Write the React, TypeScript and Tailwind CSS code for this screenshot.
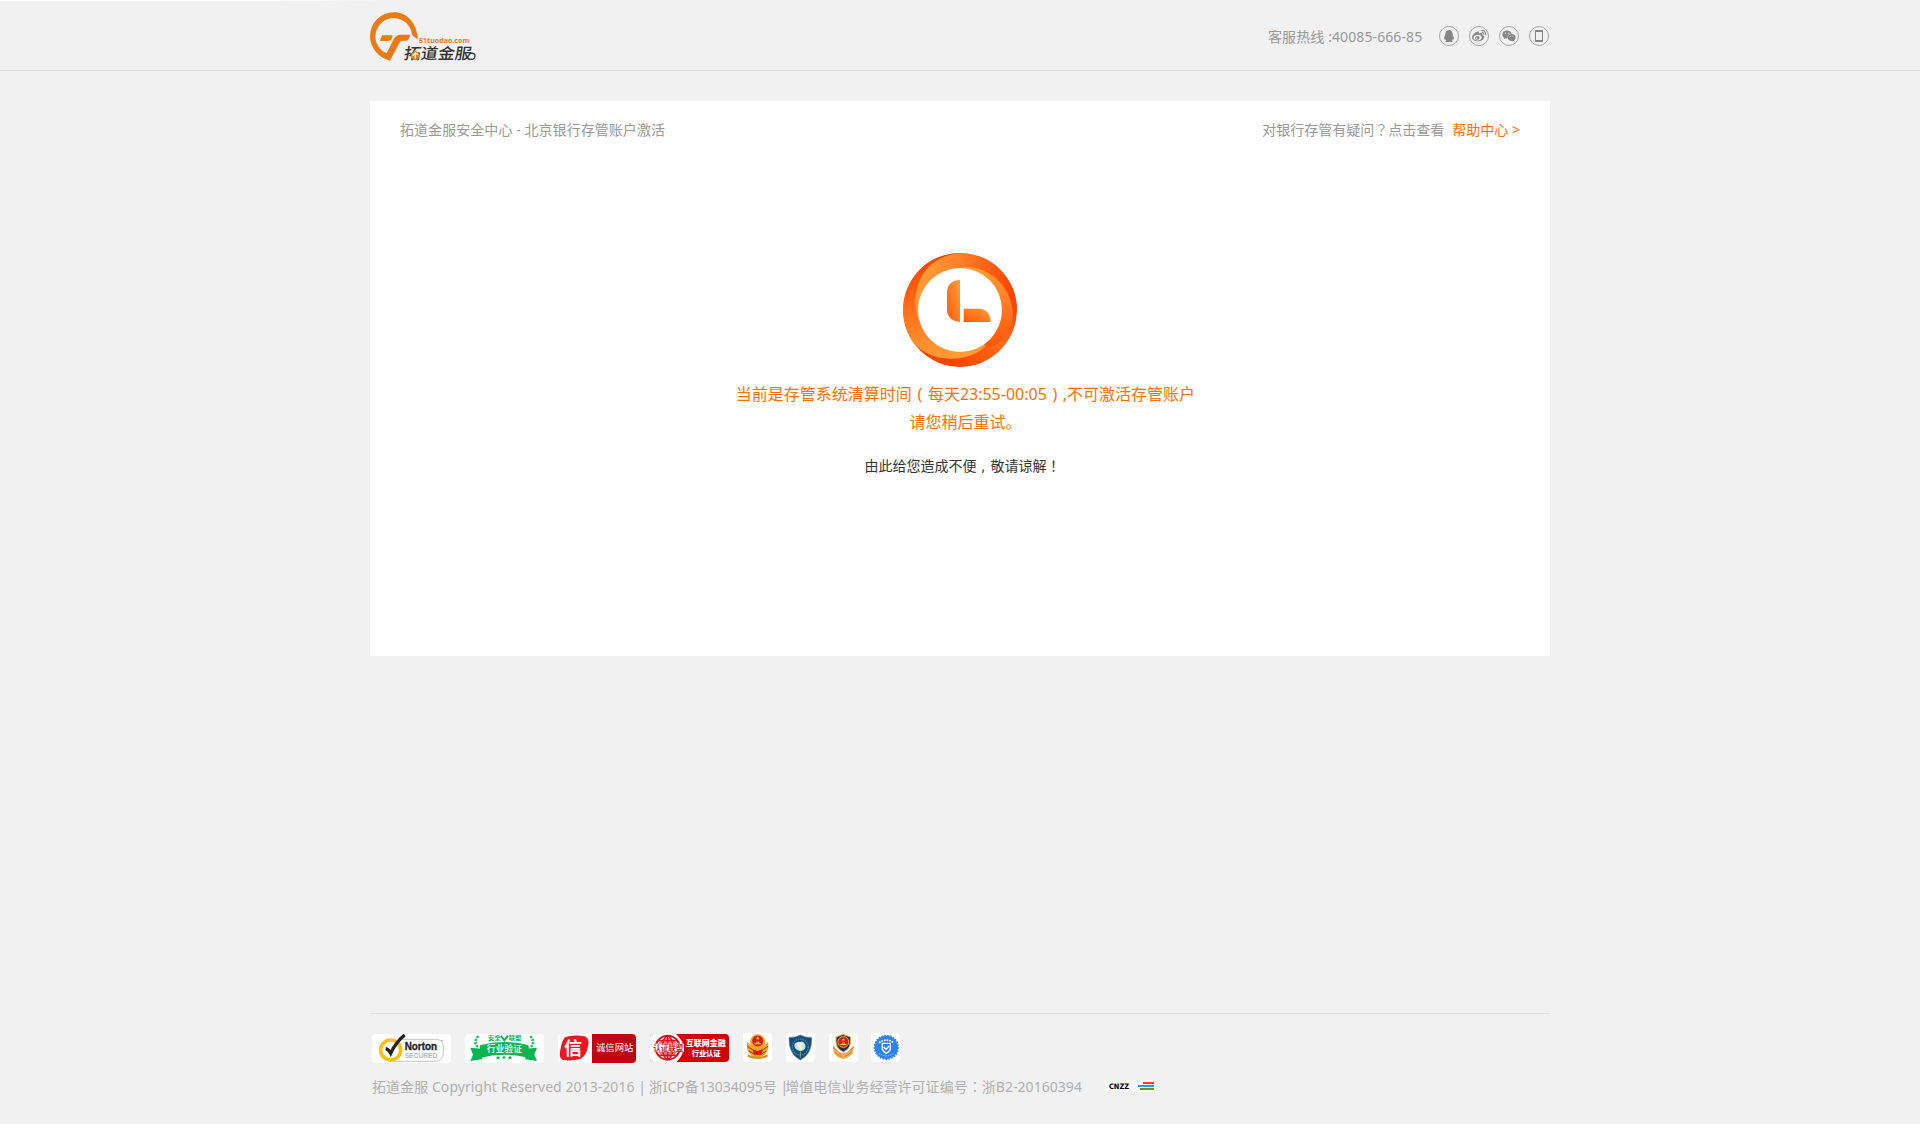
import React from "react";
import { FaQq, FaWeibo, FaWeixin } from "react-icons/fa";

const CJK = "font-['Noto_Sans','Noto_Sans_CJK_SC',sans-serif]";

/* Full-width punctuation centred in its cell */
function Mid({ children }: { children: React.ReactNode }) {
  return <span className="font-['Noto_Sans_CJK_TC',sans-serif] leading-0">{children}</span>;
}

function Logo() {
  return (
    <svg className="mt-3 block h-[50px] w-[108px]" viewBox="30 36 324 150">
      <g fill="#ec7a14">
        <path d="M90 182 C56 172 30 145 30 108 A71.500 71.500 0 0 1 101.500 36.500 C140 36.500 170 66 174 118 C166 113 162 112 156 104 A55 55 0 1 0 80 160 L100 119 Q106 105 120 104 L151 104 Q147 122 138 122 L128 122 Q121 122 118 129 Z" />
        <path d="M66 106 H98 Q96 123 86 123 H60 Z" />
      </g>
      <text x="177" y="129" textLength="151" lengthAdjust="spacingAndGlyphs" fill="#ec7a14" fontSize="20" fontWeight="700" fontFamily="'Noto Sans', sans-serif">51tuodao.com</text>
      <text x="0" y="0" transform="translate(130 176) skewX(-9)" textLength="203" lengthAdjust="spacingAndGlyphs" fill="#333" fontSize="46" fontWeight="500" fontFamily="'Noto Sans CJK SC', sans-serif">拓道金服</text>
      <circle cx="166" cy="167" r="13" fill="#ec7a14" />
      <path d="M158 168 L166 158 L174 164 M166 159 V176" fill="none" stroke="#f1f1f1" strokeWidth="4" />
      <path d="M330 160 Q347 158 345 169 Q342 181 331 177" fill="none" stroke="#333" strokeWidth="4" />
    </svg>
  );
}

function Round({ children }: { children: React.ReactNode }) {
  return <span className="flex size-5 items-center justify-center rounded-full border border-[#a5a5a5] text-[#858585]">{children}</span>;
}

function Clock() {
  return (
    <svg className="block size-[114px]" viewBox="39 39 342 342">
      <defs>
        <clipPath id="disc">
          <circle cx="210" cy="210" r="171" />
        </clipPath>
        <linearGradient id="base" gradientUnits="userSpaceOnUse" x1="350" y1="170" x2="215" y2="375">
          <stop offset="0" stopColor="#ff4300" />
          <stop offset=".5" stopColor="#ff6d1c" />
          <stop offset="1" stopColor="#ff4600" />
        </linearGradient>
        <linearGradient id="left" gradientUnits="userSpaceOnUse" x1="130" y1="55" x2="170" y2="350">
          <stop offset="0" stopColor="#ff4300" />
          <stop offset="1" stopColor="#ff9d35" />
        </linearGradient>
        <linearGradient id="right" gradientUnits="userSpaceOnUse" x1="90" y1="130" x2="365" y2="150">
          <stop offset="0" stopColor="#ff9d35" />
          <stop offset=".4" stopColor="#ff812a" />
          <stop offset="1" stopColor="#ff4500" />
        </linearGradient>
        <linearGradient id="rim" gradientUnits="userSpaceOnUse" x1="270" y1="90" x2="320" y2="320">
          <stop offset="0" stopColor="#ff9d35" />
          <stop offset=".5" stopColor="#ff7c26" />
          <stop offset="1" stopColor="#ff5509" />
        </linearGradient>
        <linearGradient id="h1" x1="1" y1="0" x2="0" y2="1">
          <stop offset="0" stopColor="#ffa037" />
          <stop offset="1" stopColor="#ff5a10" />
        </linearGradient>
        <linearGradient id="h2" x1="0" y1="1" x2="1" y2="0">
          <stop offset="0" stopColor="#ff5609" />
          <stop offset="1" stopColor="#ffa037" />
        </linearGradient>
      </defs>
      <g clipPath="url(#disc)">
        <circle cx="210" cy="210" r="171" fill="url(#base)" />
        <path d="M210 39 H39 V255 C64 320 115 356 185 356 C250 356 290 325 315 285 L210 200 Z" fill="url(#left)" />
        <path d="M210 39 C120 48 76 112 76 190 Q76 215 86 240 L210 210 L368 240 L381 210 V39 Z" fill="url(#right)" />
        <path d="M220 80 C310 80 368 150 369 225 Q368 262 345 290 Q325 315 290 325 L210 210 Z" fill="url(#rim)" />
      </g>
      <circle cx="210" cy="210" r="126" fill="#fff" />
      <path d="M210 119 V246 Q171 242 171 208 V158 Q171 122 210 119 Z" fill="url(#h1)" />
      <path d="M221 206 H268 Q300 208 302 246 H221 Z" fill="url(#h2)" />
    </svg>
  );
}

function Norton() {
  return (
    <svg className="block h-[29px] w-[79px] rounded-[4px] bg-white" viewBox="36 102 237 87">
      <path d="M120 118 H230 Q250 120 250 142 V160 Q248 184 224 184 H100" fill="none" stroke="#c5c5c5" strokeWidth="3" />
      <circle cx="92" cy="150" r="30" fill="#fff" stroke="#fdc010" strokeWidth="11" />
      <path d="M77 146 Q85 147 92 160 Q108 126 134 105" fill="none" stroke="#222" strokeWidth="10" />
      <text x="134" y="150" textLength="97" lengthAdjust="spacingAndGlyphs" fontSize="31" fontWeight="700" fill="#222" stroke="#222" fontFamily="'Liberation Sans', sans-serif">Norton</text>
      <text x="134" y="173" textLength="98" lengthAdjust="spacingAndGlyphs" fontSize="23" fontWeight="700" fill="#b9b9b9" fontFamily="'Liberation Sans', sans-serif">SECURED</text>
      <circle cx="246" cy="121" r="2" fill="#777" />
    </svg>
  );
}

function Alliance() {
  return (
    <svg className="block h-[29px] w-[79px] overflow-visible rounded-[4px] bg-white" viewBox="315 102 237 87" fontFamily="'Noto Sans CJK SC', sans-serif">
      <g fill="none" stroke="#35bd66" strokeWidth="8" strokeDasharray="7 3">
        <path d="M355 108 Q338 128 355 142" />
        <path d="M511 108 Q528 128 511 142" />
      </g>
      <g fill="#0db451">
        <path d="M331 143 L366 146 V178 L331 183 L339 164 Z" />
        <path d="M531 143 L496 146 V178 L531 183 L523 164 Z" />
        <path d="M360 136 Q433 116 506 136 V174 Q433 154 360 174 Z" />
        <text x="383" y="121" textLength="39" lengthAdjust="spacingAndGlyphs" fontSize="17" fontWeight="700">安全</text>
        <text x="446" y="121" textLength="38" lengthAdjust="spacingAndGlyphs" fontSize="17" fontWeight="700">联盟</text>
        <path d="M414 166 l2 5 h5 l-4 3 2 5 -5 -3 -5 3 2 -5 -4 -3 h5 Z M432 165 l2 5 h5 l-4 3 2 5 -5 -3 -5 3 2 -5 -4 -3 h5 Z M450 166 l2 5 h5 l-4 3 2 5 -5 -3 -5 3 2 -5 -4 -3 h5 Z" />
      </g>
      <path d="M423 108 L433 121 L444 107" fill="none" stroke="#0db451" strokeWidth="6" />
      <text x="380" y="156" fontSize="26.500" fontWeight="500" fill="#fff">行业验证</text>
    </svg>
  );
}

function Integrity() {
  return (
    <svg className="block h-[29px] w-[78px] rounded-[4px] bg-white" viewBox="594 102 234 87" fontFamily="'Noto Sans CJK SC', sans-serif">
      <path d="M696 102 H828 V189 H696 Z" fill="#bf0510" />
      <path d="M616 111 Q640 103 674 109 Q690 116 684 138 Q680 168 660 177 Q635 184 608 180 Q594 172 602 145 Q606 120 616 111 Z" fill="#ee1620" />
      <text x="612" y="164" fontSize="54" fontWeight="700" fill="#fff">信</text>
      <text x="708" y="153" textLength="112" fontSize="28" fill="#fff">诚信网站</text>
    </svg>
  );
}

function Finance() {
  return (
    <svg className="block h-7 w-[79px] rounded-[4px] bg-[#d00000]" viewBox="60 102 237 84" fontFamily="'Noto Sans CJK SC', sans-serif">
      <path d="M60 102 H138 Q182 142 140 186 H60 Z" fill="#fff" />
      <g fill="none" stroke="#d9141a" strokeWidth="4">
        <circle cx="113" cy="143" r="36" strokeWidth="6" />
        <ellipse cx="113" cy="143" rx="16" ry="34" />
        <path d="M113 108 V180 M84 122 H142 M84 166 H142" />
      </g>
      <circle cx="113" cy="143" r="30" fill="#d9141a" opacity=".6" />
      <path d="M68 131 H162 V156 H68 Z" fill="#fff" />
      <text x="70" y="152" fontSize="22.500" fontWeight="700" fill="#d9141a">认证联盟</text>
      <g fill="#fff" fontWeight="900">
        <text x="167" y="139" textLength="120" fontSize="24">互联网金融</text>
        <text x="185" y="169" textLength="87" fontSize="22">行业认证</text>
      </g>
    </svg>
  );
}

function Tile({ children }: { children: React.ReactNode }) {
  return (
    <svg className="block size-[29px] rounded-[4px] bg-white" viewBox="0 0 87 87">
      {children}
    </svg>
  );
}

function Emblem() {
  return (
    <>
      <circle cx="44" cy="24" r="18" fill="#d91b12" stroke="#efb730" strokeWidth="3" />
      <path d="M44 10 l1.500 4 h4 l-3 2.500 1 4 -3.500 -2.500 -3.500 2.500 1 -4 -3 -2.500 h4 Z M34 31 H54 V34 H34 Z M39 26 H49 V29 H39 Z" fill="#ffd849" />
    </>
  );
}

export default function App() {
  return (
    <div className={`flex h-[1124px] flex-col overflow-hidden bg-[#f1f1f1] text-[14px] leading-5 text-[#999] ${CJK}`}>
      <div className="h-px w-[400px] shrink-0 bg-linear-to-r from-white from-60% to-[#f1f1f1]" />
      <header className="-mt-px h-[71px] shrink-0 border-b border-[#dcdcdc]">
        <div className="mx-auto flex w-[1180px] justify-between">
          <Logo />
          <div className="mr-px mt-[26px] flex h-5 items-center">
            <span className="mr-4 w-[155px] whitespace-nowrap pt-0.5 tracking-[0.1px]">客服热线 :40085-666-85</span>
            <div className="flex gap-2.5">
              <Round><FaQq size={12} /></Round>
              <Round><FaWeibo size={14} /></Round>
              <Round><FaWeixin size={14} /></Round>
              <Round>
                <svg className="h-3 w-2" viewBox="0 0 8 12">
                  <path d="M.5 .5 H7.500 V11.500 H.5 Z M.5 1.500 H7.500 M.5 10.500 H7.500" fill="none" stroke="currentColor" />
                </svg>
              </Round>
            </div>
          </div>
        </div>
      </header>

      <main className="mx-auto mt-[30px] h-[555px] w-[1180px] shrink-0 bg-white">
        <div className="flex h-10 justify-between px-[30px] pt-[19px]">
          <span className="tracking-[0.06px]">拓道金服安全中心 - 北京银行存管账户激活</span>
          <span className="flex">
            <span>对银行存管有疑问<Mid>？</Mid>点击查看</span>
            <a className="ml-2 text-[#ff7200]">帮助中心 &gt;</a>
          </span>
        </div>
        <div className="mt-28 flex flex-col items-center">
          <Clock />
          <p className="mt-[13px] whitespace-nowrap pl-[11px] text-center text-[16px] leading-7 text-[#ff7200]">
            当前是存管系统清算时间<span className="inline-block w-4 text-center">(</span>每天23:55-00:05<span className="inline-block w-4 text-center">)</span>,不可激活存管账户
            <br />
            请您稍后重试。
          </p>
          <p className="mt-5 pl-[5px] leading-5 text-[#333]">
            由此给您造成不便<span className="inline-block w-3.5 pl-[5px] leading-0">,</span>敬请谅解<Mid>！</Mid>
          </p>
        </div>
      </main>

      <footer className="mx-auto mt-auto h-[111px] w-[1180px] shrink-0 border-t border-[#dcdcdc]">
        <div className="ml-0.5 mt-[19px] flex h-[30px] items-start gap-3.5">
          <div className="mt-px"><Norton /></div>
          <div className="mt-px"><Alliance /></div>
          <div className="mt-px"><Integrity /></div>
          <div className="mt-px"><Finance /></div>
          <Tile>
            <path d="M13 26 Q8 54 24 66 L44 77 L64 66 Q80 54 75 26 L60 42 H28 Z" fill="#e8a91d" />
            <path d="M13 40 L40 58 M75 40 L48 58 M18 54 L38 66 M70 54 L50 66" stroke="#be2c12" strokeWidth="3" />
            <circle cx="44" cy="27" r="23" fill="#e8a91d" />
            <Emblem />
            <path d="M29 49 L44 54 L59 49 L56 63 L44 67 L32 63 Z" fill="#d91b12" />
            <path d="M14 64 Q44 80 74 64 V71 Q44 84 14 71 Z" fill="#d98a16" />
          </Tile>
          <Tile>
            <path d="M9 13 Q27 15 43 6 Q59 15 77 13 Q79 64 43 81 Q7 64 9 13 Z" fill="#174c7b" stroke="#71899c" strokeWidth="2" />
            <circle cx="43" cy="42" r="24" fill="none" stroke="#4c8e9c" strokeWidth="4" strokeDasharray="4 3" />
            <path d="M25 34 Q32 23 42 27 Q52 22 57 34 Q62 44 53 51 Q44 57 35 52 Q24 46 25 34 Z" fill="#c1e3de" />
            <path d="M29 33 Q40 25 52 31 L46 40 L54 44 L42 52 L37 43 Z" fill="#edf6dd" />
            <path d="M43 55 V75" stroke="#b7c76b" strokeWidth="2" />
          </Tile>
          <Tile>
            <path d="M13 35 Q8 63 30 74 L43 78 L56 74 Q79 62 73 35 L57 59 H29 Z" fill="#e8b34b" />
            <path d="M12 43 L36 62 M74 43 L50 62 M17 58 L39 71 M69 58 L47 71" stroke="#ad6a20" strokeWidth="2" />
            <path d="M21 12 L42 4 L65 12 Q69 47 43 57 Q17 47 21 12 Z" fill="#24306c" stroke="#e8b34b" strokeWidth="3" />
            <g transform="translate(3 5) scale(.91)"><Emblem /></g>
          </Tile>
          <div className="-ml-px">
            <Tile>
              <circle cx="46" cy="43" r="35" fill="#2f82f5" />
              <circle cx="46" cy="43" r="36" fill="none" stroke="#2f82f5" strokeWidth="4" strokeDasharray="5 4" />
              <path d="M24 29 Q46 14 68 29" fill="none" stroke="#fff" strokeWidth="5" strokeDasharray="5 3" />
              <path d="M24 61 Q46 76 68 61" fill="none" stroke="#a9ceff" strokeWidth="3" strokeDasharray="4 3" />
              <path d="M34 31 H58 V48 Q56 56 46 61 Q36 56 34 48 Z" fill="none" stroke="#fff" strokeWidth="4" />
              <path d="M38 42 L45 49 L54 40" fill="none" stroke="#fff" strokeWidth="4" />
            </Tile>
          </div>
        </div>
        <div className="ml-0.5 mt-3.5 flex items-center text-[#b0b0b0]">
          <span className="w-[711px] whitespace-nowrap">
            <span className="tracking-[0.06px]">拓道金服 Copyright Reserved 2013-2016 |</span>
            <span className="-ml-px"> 浙ICP备13034095号 |</span>
            <span className="-ml-[3px] tracking-[0.04px]">增值电信业务经营许可证编号<Mid>：</Mid>浙B2-20160394</span>
          </span>
          <svg className="-mt-0.5 ml-[22px] h-3 w-[50px]" viewBox="0 0 50 12">
            <path d="M0 0 H50 V12 H0 Z" fill="#fafafa" />
            <text x="4" y="8.500" textLength="20" lengthAdjust="spacingAndGlyphs" fontSize="7.500" fontWeight="700" fill="#000" fontFamily="'DejaVu Sans', sans-serif">CNZZ</text>
            <path d="M38 2 H49 V4 H38 Z" fill="#ff3540" />
            <path d="M33 5 H49 V7 H33 Z" fill="#2e9bd0" />
            <path d="M35 8 H49 V10 H35 Z" fill="#6b9b00" />
          </svg>
        </div>
      </footer>
    </div>
  );
}
